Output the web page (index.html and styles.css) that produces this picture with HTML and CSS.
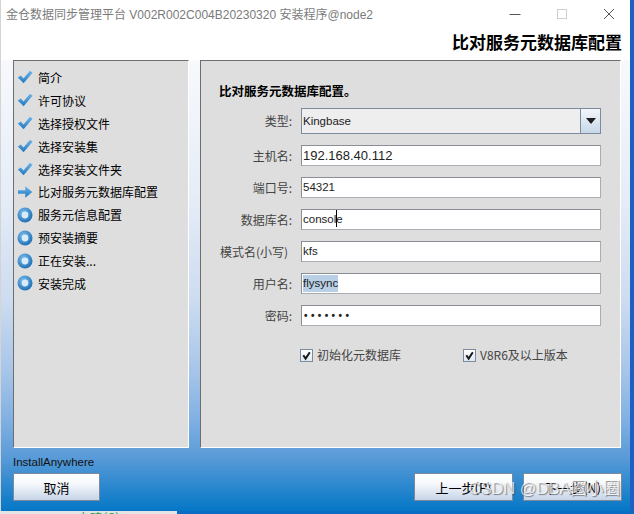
FILE: index.html
```html
<!DOCTYPE html>
<html lang="zh-CN">
<head>
<meta charset="utf-8">
<title>安装程序</title>
<link rel="stylesheet" href="styles.css">
</head>
<body>
<div class="window">
  <div class="titlebar">
    <span class="title">金仓数据同步管理平台 V002R002C004B20230320 安装程序@node2</span>
    <div class="controls">
      <svg class="ctl" width="12" height="12" viewBox="0 0 12 12"><path d="M0.5 6.5 H11.5" stroke="#555" stroke-width="1"/></svg>
      <svg class="ctl" width="12" height="12" viewBox="0 0 12 12"><rect x="1.5" y="1.5" width="9" height="9" fill="none" stroke="#cfcfcf" stroke-width="1"/></svg>
      <svg class="ctl" width="12" height="12" viewBox="0 0 12 12"><path d="M1 1 L11 11 M11 1 L1 11" stroke="#555" stroke-width="1"/></svg>
    </div>
  </div>
  <div class="header"><h1>比对服务元数据库配置</h1></div>
  <div class="main">
    <div class="panels">
      <ul class="steps">
        <li><svg class="ic" viewBox="0 0 16 16"><use href="#i-check"/></svg><span>简介</span></li>
        <li><svg class="ic" viewBox="0 0 16 16"><use href="#i-check"/></svg><span>许可协议</span></li>
        <li><svg class="ic" viewBox="0 0 16 16"><use href="#i-check"/></svg><span>选择授权文件</span></li>
        <li><svg class="ic" viewBox="0 0 16 16"><use href="#i-check"/></svg><span>选择安装集</span></li>
        <li><svg class="ic" viewBox="0 0 16 16"><use href="#i-check"/></svg><span>选择安装文件夹</span></li>
        <li><svg class="ic" viewBox="0 0 16 16"><use href="#i-arrow"/></svg><span>比对服务元数据库配置</span></li>
        <li><svg class="ic" viewBox="0 0 16 16"><use href="#i-ring"/></svg><span>服务元信息配置</span></li>
        <li><svg class="ic" viewBox="0 0 16 16"><use href="#i-ring"/></svg><span>预安装摘要</span></li>
        <li><svg class="ic" viewBox="0 0 16 16"><use href="#i-ring"/></svg><span>正在安装...</span></li>
        <li><svg class="ic" viewBox="0 0 16 16"><use href="#i-ring"/></svg><span>安装完成</span></li>
      </ul>
      <div class="form-panel">
        <h2>比对服务元数据库配置。</h2>
        <div class="form">
          <label class="lbl">类型:</label>
          <div class="combo"><span class="combo-text">Kingbase</span><span class="combo-btn"><svg width="10" height="6" viewBox="0 0 10 6"><path d="M0 0 H10 L5 6 Z" fill="#1e1e1e"/></svg></span></div>
          <label class="lbl">主机名:</label>
          <div class="field ip">192.168.40.112</div>
          <label class="lbl">端口号:</label>
          <div class="field">54321</div>
          <label class="lbl">数据库名:</label>
          <div class="field">consol<span class="caret"></span>e</div>
          <label class="lbl lbl-nocolon">模式名(小写)</label>
          <div class="field">kfs</div>
          <label class="lbl">用户名:</label>
          <div class="field"><span class="sel">flysync</span></div>
          <label class="lbl">密码:</label>
          <div class="field pwd">•••••••</div>
        </div>
        <div class="checks">
          <div class="chk"><span class="box"><svg width="11" height="11" viewBox="0 0 11 11"><path d="M2.3 5.3 L4.6 8.6 L8.8 2.2" fill="none" stroke="#1a1a1a" stroke-width="2"/></svg></span><span>初始化元数据库</span></div>
          <div class="chk"><span class="box"><svg width="11" height="11" viewBox="0 0 11 11"><path d="M2.3 5.3 L4.6 8.6 L8.8 2.2" fill="none" stroke="#1a1a1a" stroke-width="2"/></svg></span><span>V8R6及以上版本</span></div>
        </div>
      </div>
    </div>
    <div class="brand">InstallAnywhere</div>
    <div class="buttons">
      <button class="btn btn-cancel">取消</button>
      <span class="spacer"></span>
      <button class="btn">上一步(P)</button>
      <button class="btn">下一步(N)</button>
    </div>
    <div class="watermark">CSDN @DBA圈小圈</div>
  </div>
</div>
<div class="desktop">
  <div class="desk-left"><span class="desk-text">自建(S)</span></div>
  <div class="desk-right"></div>
</div>

<svg class="defs" width="0" height="0">
  <defs>
    <linearGradient id="g-blue" x1="0" y1="0" x2="0" y2="1">
      <stop offset="0" stop-color="#6db4ea"/>
      <stop offset="1" stop-color="#1f78c0"/>
    </linearGradient>
    <radialGradient id="g-ring" cx="0.4" cy="0.35" r="0.7">
      <stop offset="0" stop-color="#7cc0ef"/>
      <stop offset="1" stop-color="#1a6bb3"/>
    </radialGradient>
    <symbol id="i-check" viewBox="0 0 16 16">
      <path d="M0.8 8.6 L3.8 6.4 L6.5 9.6 L13 1.8 L15.5 3.8 L6.6 14.3 Z" fill="url(#g-blue)"/>
    </symbol>
    <symbol id="i-arrow" viewBox="0 0 16 16">
      <path d="M1 6.2 H8.3 V2.3 L15.3 8 L8.3 13.7 V9.8 H1 Z" fill="url(#g-blue)"/>
    </symbol>
    <symbol id="i-ring" viewBox="0 0 16 16">
      <circle cx="8" cy="8" r="7.5" fill="url(#g-ring)"/>
      <circle cx="8" cy="8" r="3.4" fill="#d9ebf8"/>
    </symbol>
  </defs>
</svg>
</body>
</html>
```

FILE: styles.css
```css
html, body {
  margin: 0;
  padding: 0;
  height: 514px;
  overflow: hidden;
}
body {
  background: #1d5fc2;
  font-family: "Liberation Sans", "Noto Sans CJK SC", sans-serif;
  color: #000;
}
.defs {
  position: absolute;
  width: 0;
  height: 0;
}
.window {
  width: 630px;
  height: 511px;
  background: #fff;
  display: flex;
  flex-direction: column;
  box-sizing: border-box;
  border-left: 1px solid #d4d4d4;
}
.titlebar {
  height: 30px;
  display: flex;
  align-items: center;
  padding-left: 5px;
  box-sizing: border-box;
  padding-bottom: 3px;
}
.title {
  font-family: "Liberation Sans", "Noto Sans CJK SC", sans-serif;
  font-size: 12px;
  color: #7b7b7b;
  white-space: nowrap;
}
.controls {
  margin-left: auto;
  display: flex;
  align-items: center;
  gap: 35px;
  padding-right: 15px;
}
.ctl {
  display: block;
}
.header {
  height: 30px;
  display: flex;
  justify-content: flex-end;
  align-items: flex-start;
  padding-right: 8px;
}
.header h1 {
  margin: 0;
  font-family: "Noto Sans CJK SC", sans-serif;
  font-size: 17px;
  font-weight: bold;
  line-height: 24px;
}
.main {
  position: relative;
  flex: 1;
  display: flex;
  flex-direction: column;
  padding: 0 8px 10px 12px;
  background: linear-gradient(to bottom, #f7f9fc 0%, #e6edf7 30%, #cddcf0 53%, #a7c5e9 69%, #7fb0e2 80%, #5a9bd8 88%, #0477c6 100%);
}
.panels {
  height: 388px;
  display: flex;
  gap: 11px;
}
.steps {
  list-style: none;
  margin: 0;
  width: 176px;
  box-sizing: border-box;
  padding: 5px 0 0 3px;
  background: #dedede;
  border-top: 1px solid #6e6e6e;
  border-left: 1px solid #6e6e6e;
  border-right: 1px solid #fff;
  border-bottom: 1px solid #fff;
}
.steps li {
  height: 22.9px;
  display: flex;
  align-items: center;
  gap: 5px;
  font-family: "Noto Sans CJK SC", sans-serif;
  font-size: 12px;
  white-space: nowrap;
}
.ic {
  width: 16px;
  height: 16px;
  flex: none;
}
.form-panel {
  width: 421px;
  box-sizing: border-box;
  padding: 22px 0 0 18px;
  background: #dedede;
  border-top: 1px solid #6e6e6e;
  border-left: 1px solid #6e6e6e;
  border-right: 1px solid #fff;
  border-bottom: 1px solid #fff;
}
.form-panel h2 {
  margin: 0 0 9px 0;
  font-family: "Noto Sans CJK SC", sans-serif;
  font-size: 12.5px;
  font-weight: bold;
  line-height: 16px;
}
.form {
  display: grid;
  grid-template-columns: 73px 300px;
  column-gap: 9px;
  row-gap: 11px;
  align-items: center;
}
.lbl {
  text-align: right;
  font-family: "Noto Sans CJK SC", sans-serif;
  font-size: 12px;
  color: #444;
  white-space: nowrap;
  line-height: 16px;
}
.lbl-nocolon {
  padding-right: 4px;
}
.combo {
  height: 26px;
  display: flex;
  box-sizing: border-box;
  border: 1px solid #7b8c9e;
  background: #eeeeee;
}
.combo-text {
  flex: 1;
  padding-left: 1px;
  font-size: 11.5px;
  line-height: 24px;
  color: #222;
  border-right: 1px solid #7b8c9e;
}
.combo-btn {
  width: 19px;
  display: flex;
  align-items: center;
  justify-content: center;
  background: linear-gradient(to bottom, #f3f6fa, #c7d7e8);
}
.field {
  height: 21px;
  box-sizing: border-box;
  border: 1px solid #8a8f96;
  border-right-color: #a9adb3;
  border-bottom-color: #a9adb3;
  background: #fff;
  padding-left: 1px;
  font-size: 11.5px;
  line-height: 19px;
  color: #222;
  white-space: nowrap;
}
.field.ip {
  font-size: 13px;
}
.caret {
  display: inline-block;
  width: 0;
  height: 17px;
  border-left: 1px solid #000;
  vertical-align: middle;
  margin-right: -1px;
  position: relative;
  top: -1px;
}
.sel {
  background: #b8cfe5;
  display: inline-block;
  line-height: 17px;
}
.pwd {
  font-weight: bold;
  font-size: 10px;
  letter-spacing: 3.4px;
  padding-left: 2px;
}
.checks {
  display: grid;
  grid-template-columns: 163px auto;
  margin: 21px 0 0 81px;
}
.chk {
  display: flex;
  align-items: center;
  gap: 4px;
  font-family: "Noto Sans CJK SC", sans-serif;
  font-size: 12px;
  color: #444;
  line-height: 16px;
}
.box {
  width: 13px;
  height: 13px;
  box-sizing: border-box;
  border: 1px solid #7b8c9e;
  background: linear-gradient(to bottom, #ffffff, #dfe8f2);
  display: flex;
  align-items: center;
  justify-content: center;
}
.box svg {
  display: block;
}
.brand {
  margin-top: 7px;
  font-size: 11.5px;
  line-height: 14px;
  color: #111;
}
.buttons {
  margin-top: 4px;
  display: flex;
  gap: 10px;
}
.spacer {
  flex: 1;
}
.btn {
  width: 99px;
  height: 28px;
  margin: 0;
  padding: 0;
  box-sizing: border-box;
  border: 1px solid #7d8998;
  background: linear-gradient(to bottom, #ffffff 0%, #f7f9fc 35%, #c6d5e8 100%);
  font-family: "Noto Sans CJK SC", sans-serif;
  font-size: 13px;
  color: #000;
}
.btn-cancel {
  width: 87px;
}
.watermark {
  position: absolute;
  right: 10px;
  bottom: 12px;
  font-family: "Liberation Sans", "Noto Sans CJK SC", sans-serif;
  font-size: 16.5px;
  color: rgba(255, 255, 255, 0.75);
  text-shadow: 1px 1px 1px rgba(60, 60, 60, 0.6);
  white-space: nowrap;
  pointer-events: none;
}
.desktop {
  display: flex;
  height: 20px;
}
.desk-left {
  width: 177px;
  background: #e4e4e4;
  padding-left: 77px;
  box-sizing: border-box;
  overflow: hidden;
}
.desk-text {
  display: block;
  font-family: "Noto Sans CJK SC", sans-serif;
  font-size: 13px;
  line-height: 14px;
  color: #2aa84a;
  margin-top: 0;
}
.desk-right {
  flex: 1;
  background: #0b6cc4;
}
```
